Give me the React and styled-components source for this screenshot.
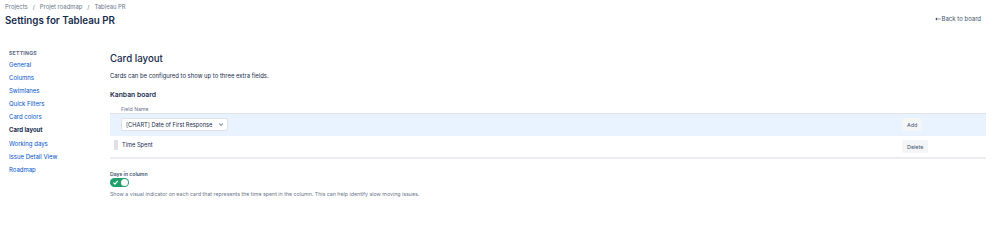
import styled, { createGlobalStyle } from "styled-components";

const GlobalStyle = createGlobalStyle`
  html, body {
    margin: 0;
    padding: 0;
    background: #ffffff;
  }
  body {
    font-family: Inter, "Noto Sans", sans-serif;
    color: #172b4d;
  }
`;

const NAV = [
  "General",
  "Columns",
  "Swimlanes",
  "Quick Filters",
  "Card colors",
  "Card layout",
  "Working days",
  "Issue Detail View",
  "Roadmap",
];

export default function App() {
  return (
    <Page>
      <GlobalStyle />
      <Header>
        <HeaderText>
          <Crumbs>
            <span>Projects</span>
            <Sep>/</Sep>
            <span>Projet roadmap</span>
            <Sep>/</Sep>
            <span>Tableau PR</span>
          </Crumbs>
          <Title>Settings for Tableau PR</Title>
        </HeaderText>
        <BackLink>
          <BackArrow viewBox="0 0 10 6">
            <path d="M0.5 3 L3.2 0.6 L3.2 2.4 L9.5 2.4 L9.5 3.6 L3.2 3.6 L3.2 5.4 Z" fill="currentColor" />
          </BackArrow>
          Back to board
        </BackLink>
      </Header>

      <Body>
        <Sidebar>
          <SideHead>Settings</SideHead>
          {NAV.map((n) => (
            <NavItem key={n} $active={n === "Card layout"}>
              {n}
            </NavItem>
          ))}
        </Sidebar>

        <Main>
          <H1>Card layout</H1>
          <Lead>Cards can be configured to show up to three extra fields.</Lead>
          <H2>Kanban board</H2>

          <Table>
            <ColHead>Field Name</ColHead>
            <Row $highlight>
              <FieldCell>
                <Select>
                  [CHART] Date of First Response
                  <Chevron viewBox="0 0 8 6">
                    <path d="M1.5 1.8 L4 4.2 L6.5 1.8" fill="none" stroke="currentColor" strokeWidth="1.3" />
                  </Chevron>
                </Select>
              </FieldCell>
              <ActionCell>
                <Btn>Add</Btn>
              </ActionCell>
            </Row>
            <Row>
              <FieldCell>
                <Handle />
                <FieldName>Time Spent</FieldName>
              </FieldCell>
              <ActionCell>
                <Btn>Delete</Btn>
              </ActionCell>
            </Row>
          </Table>

          <ToggleBlock>
            <ToggleLabel>Days in column</ToggleLabel>
            <Toggle>
              <CheckMark viewBox="0 0 8 8">
                <path d="M1.6 4.2 L3.3 5.9 L6.5 2.3" fill="none" stroke="#fff" strokeWidth="1.4" />
              </CheckMark>
              <Knob />
            </Toggle>
            <Help>
              Show a visual indicator on each card that represents the time spent in the column. This can help
              identify slow moving issues.
            </Help>
          </ToggleBlock>
        </Main>
      </Body>
    </Page>
  );
}

/* ================= styles ================= */

const Page = styled.div`
  width: 998px;
  height: 226px;
  overflow: hidden;
`;

const Header = styled.header`
  display: flex;
  justify-content: space-between;
  align-items: flex-start;
  padding: 3px 17px 0 5px;
`;

const HeaderText = styled.div`
  display: flex;
  flex-direction: column;
`;

const Crumbs = styled.div`
  display: flex;
  gap: 4px;
  font-size: 5.9px;
  line-height: 8px;
  color: #6b778c;
`;

const Sep = styled.span`
  padding: 0 1px;
`;

const Title = styled.h1`
  margin: 3px 0 0;
  font-size: 9.8px;
  line-height: 14px;
  font-weight: 600;
  color: #172b4d;
`;

const BackLink = styled.a`
  margin-top: 12px;
  display: inline-flex;
  align-items: center;
  gap: 1px;
  font-size: 6px;
  line-height: 8px;
  color: #42526e;
`;

const BackArrow = styled.svg`
  width: 6px;
  height: 4px;
  color: #253858;
`;

const Body = styled.div`
  display: flex;
  padding-top: 20px;
`;

const Sidebar = styled.nav`
  width: 101px;
  padding: 1px 0 0 9px;
  display: flex;
  flex-direction: column;
`;

const SideHead = styled.div`
  font-size: 5.2px;
  line-height: 8px;
  font-weight: 700;
  letter-spacing: 0.04em;
  text-transform: uppercase;
  color: #5e6c84;
  margin-bottom: 1px;
`;

const NavItem = styled.div`
  font-size: 6px;
  line-height: 13.1px;
  color: ${(p) => (p.$active ? "#172b4d" : "#0052cc")};
  font-weight: ${(p) => (p.$active ? 700 : 400)};
`;

const Main = styled.main`
  flex: 1;
  padding-right: 12px;
  padding-top: 4px;
`;

const H1 = styled.h2`
  margin: 0;
  font-size: 9.7px;
  line-height: 14px;
  font-weight: 500;
  color: #172b4d;
`;

const Lead = styled.p`
  margin: 5px 0 0;
  font-size: 5.9px;
  line-height: 9px;
  color: #172b4d;
`;

const H2 = styled.h3`
  margin: 10px 0 0;
  font-size: 6.8px;
  line-height: 10px;
  font-weight: 600;
  color: #172b4d;
`;

const Table = styled.div`
  margin-top: 5px;
  display: flex;
  flex-direction: column;
  border-bottom: 2px solid #ebecf0;
`;

const ColHead = styled.div`
  padding-left: 11px;
  font-size: 5.2px;
  line-height: 8px;
  color: #6b778c;
  border-bottom: 1px solid #dfe1e6;
`;

const Row = styled.div`
  display: flex;
  align-items: flex-start;
  justify-content: space-between;
  box-sizing: border-box;
  height: ${(p) => (p.$highlight ? "22px" : "21px")};
  padding: 4px 0 0 4px;
  background: ${(p) => (p.$highlight ? "#e9f2ff" : "#ffffff")};
`;

const FieldCell = styled.div`
  display: flex;
  align-items: center;
  gap: 4px;
`;

const ActionCell = styled.div`
  width: 84px;
  display: flex;
`;

const Select = styled.div`
  margin-left: 7px;
  display: inline-flex;
  align-items: center;
  gap: 6px;
  height: 13px;
  padding: 0 3px 0 4px;
  background: #ffffff;
  border: 1px solid #dfe1e6;
  border-radius: 2px;
  font-size: 5.7px;
  color: #172b4d;
  box-sizing: border-box;
`;

const Chevron = styled.svg`
  width: 6px;
  height: 5px;
  color: #42526e;
`;

const Handle = styled.div`
  width: 4px;
  height: 10px;
  background: #dfe1e6;
`;

const FieldName = styled.span`
  font-size: 5.7px;
  line-height: 8px;
  color: #172b4d;
`;

const Btn = styled.button`
  border: none;
  border-radius: 2px;
  background: #f4f5f7;
  color: #42526e;
  font-family: inherit;
  font-size: 5.4px;
  height: 13px;
  padding: 0 5px;
  cursor: pointer;
`;

const ToggleBlock = styled.div`
  margin-top: 12px;
  display: flex;
  flex-direction: column;
  align-items: flex-start;
`;

const ToggleLabel = styled.div`
  font-size: 5.1px;
  line-height: 7px;
  font-weight: 600;
  color: #42526e;
`;

const Toggle = styled.div`
  position: relative;
  width: 19px;
  height: 9px;
  border-radius: 5px;
  background: #22a06b;
`;

const CheckMark = styled.svg`
  position: absolute;
  left: 2px;
  top: 1px;
  width: 7px;
  height: 7px;
`;

const Knob = styled.div`
  position: absolute;
  right: 1px;
  top: 1px;
  width: 7px;
  height: 7px;
  border-radius: 50%;
  background: #ffffff;
`;

const Help = styled.p`
  margin: 3px 0 0;
  font-size: 5.25px;
  line-height: 8px;
  color: #6b778c;
`;
